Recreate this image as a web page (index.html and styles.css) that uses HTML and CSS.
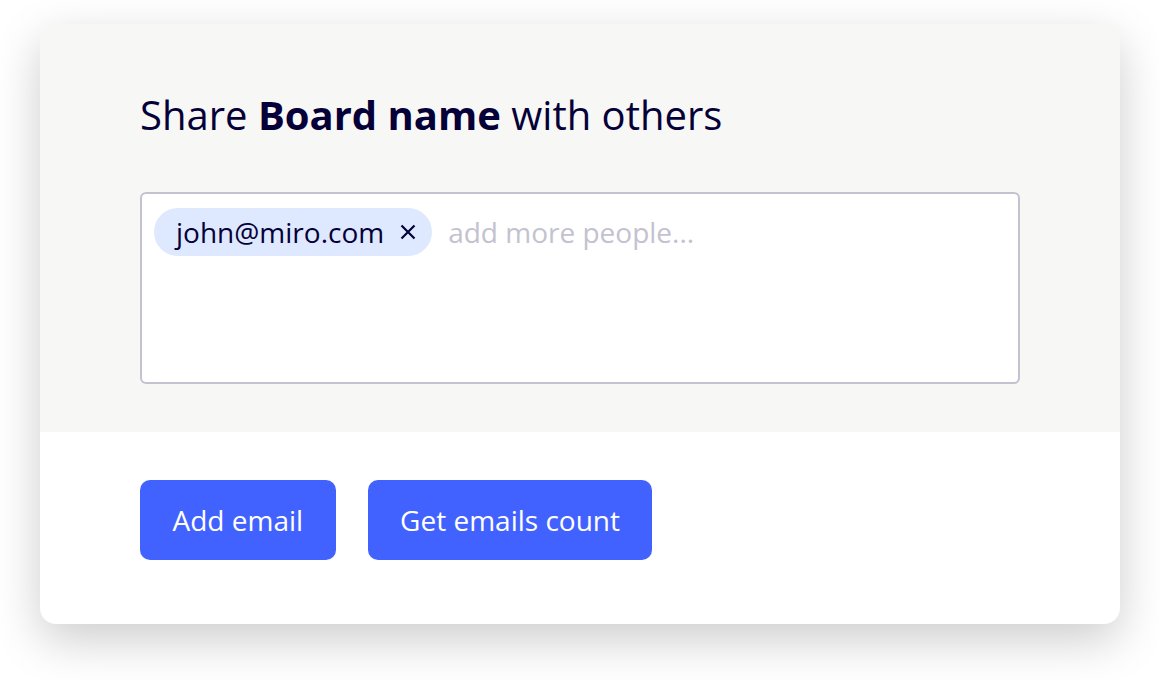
FILE: index.html
```html
<!DOCTYPE html>
<html>
<head>
<meta charset="utf-8">
<link rel="stylesheet" href="styles.css">
</head>
<body>
<div class="card">
  <div class="top">
    <h1 class="title">Share <b>Board name</b> with others</h1>
    <div class="emails">
      <span class="chip"><span class="chip-text">john@miro.com</span><svg class="chip-x" width="16" height="16" viewBox="0 0 16 16"><path d="M1.5 1.5L14.5 14.5M14.5 1.5L1.5 14.5" stroke="#050038" stroke-width="2.2" fill="none"/></svg></span>
      <span class="placeholder">add more people...</span>
    </div>
  </div>
  <div class="bottom">
    <button class="btn">Add email</button>
    <button class="btn">Get emails count</button>
  </div>
</div>
</body>
</html>
```
FILE: styles.css
```css
html, body {
  margin: 0;
  padding: 0;
  background: #ffffff;
  font-family: "Open Sans", "Noto Sans", sans-serif;
  color: #050038;
}
body {
  padding: 24px 40px;
  min-height: 680px;
  box-sizing: border-box;
}
.card {
  width: 1080px;
  height: 600px;
  border-radius: 16px;
  overflow: hidden;
  background: #ffffff;
  box-shadow: 0 16px 48px rgba(0, 0, 0, 0.2);
  display: flex;
  flex-direction: column;
}
.top {
  background: #f7f7f5;
  padding: 63px 100px 48px;
}
.title {
  margin: 0 0 49px;
  font-size: 40px;
  line-height: 56px;
  font-weight: 400;
}
.title b {
  font-weight: 700;
}
.emails {
  height: 192px;
  box-sizing: border-box;
  border: 2px solid #c3c2cf;
  border-radius: 6px;
  background: #ffffff;
  padding: 14px 12px;
  display: flex;
  align-items: flex-start;
  gap: 16px;
}
.chip {
  display: flex;
  align-items: center;
  height: 48px;
  padding: 0 16px 0 22px;
  border-radius: 24px;
  background: #dee8ff;
  font-size: 28px;
  gap: 16px;
}
.chip-x {
  display: block;
}
.placeholder {
  line-height: 48px;
  font-size: 28px;
  color: #c3c2cf;
}
.bottom {
  padding: 48px 100px;
  display: flex;
  gap: 32px;
}
.btn {
  height: 80px;
  padding: 0 32.5px;
  border: none;
  border-radius: 10px;
  background: #4262ff;
  color: #ffffff;
  font-family: "Open Sans", "Noto Sans", sans-serif;
  font-size: 28px;
}
```
